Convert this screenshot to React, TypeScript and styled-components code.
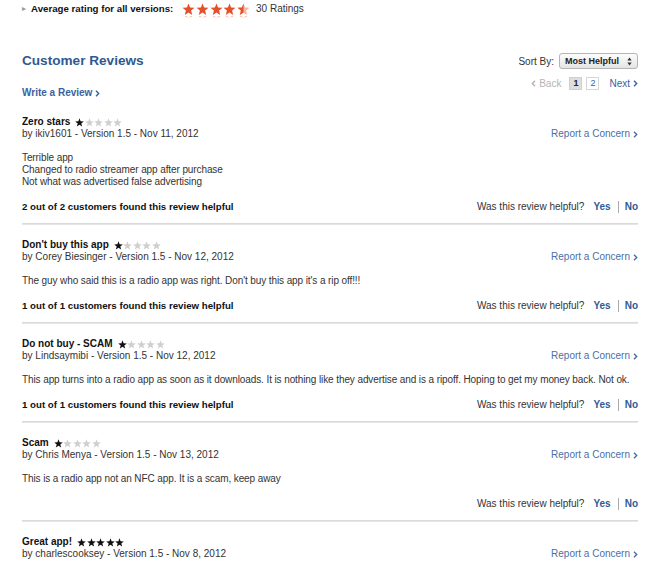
import styled, { createGlobalStyle } from 'styled-components';

interface Review {
    title: string
    rating: number
    author: string
    date: string
    body: string[]
    helpful?: string
}

const reviews: Review[] = [
    {
        title: "Zero stars",
        rating: 1,
        author: "ikiv1601",
        date: "Nov 11, 2012",
        body: ["Terrible app", "Changed to radio streamer app after purchase", "Not what was advertised false advertising"],
        helpful: "2 out of 2 customers found this review helpful",
    },
    {
        title: "Don't buy this app",
        rating: 1,
        author: "Corey Biesinger",
        date: "Nov 12, 2012",
        body: ["The guy who said this is a radio app was right. Don't buy this app it's a rip off!!!"],
        helpful: "1 out of 1 customers found this review helpful",
    },
    {
        title: "Do not buy - SCAM",
        rating: 1,
        author: "Lindsaymibi",
        date: "Nov 12, 2012",
        body: ["This app turns into a radio app as soon as it downloads. It is nothing like they advertise and is a ripoff. Hoping to get my money back. Not ok."],
        helpful: "1 out of 1 customers found this review helpful",
    },
    {
        title: "Scam",
        rating: 1,
        author: "Chris Menya",
        date: "Nov 13, 2012",
        body: ["This is a radio app not an NFC app. It is a scam, keep away"],
    },
    {
        title: "Great app!",
        rating: 5,
        author: "charlescooksey",
        date: "Nov 8, 2012",
        body: [],
    },
];


function BigStar({ half }: { half?: boolean }): JSX.Element {
    const d = "M6.5 0.5 L8.1 4.6 L12.5 4.8 L9.1 7.6 L10.2 11.9 L6.5 9.5 L2.8 11.9 L3.9 7.6 L0.5 4.8 L4.9 4.6 Z";
    return (
        <svg width="13" height="17" viewBox="0 0 13 17">
            <defs>
                <clipPath id="halfclip">
                    <rect x="0" y="0" width="6.5" height="17" />
                </clipPath>
                <linearGradient id="refl" x1="0" y1="0" x2="0" y2="1">
                    <stop offset="0" stopColor="#f3b9a8" />
                    <stop offset="1" stopColor="#ffffff" />
                </linearGradient>
            </defs>
            {half && <path d={d} fill="#f6b59e" />}
            <path d={d} fill="#e5502b" clipPath={half ? "url(#halfclip)" : undefined} />
            <path d="M3.2 13.4 Q6.5 16.2 9.8 13.4" stroke="url(#refl)" strokeWidth="1.6" fill="none" />
        </svg>
    );
}

function SmallStars({ rating }: { rating: number }): JSX.Element {
    const d = "M4.5 0.3 L5.6 3.3 L8.8 3.4 L6.3 5.4 L7.2 8.6 L4.5 6.8 L1.8 8.6 L2.7 5.4 L0.2 3.4 L3.4 3.3 Z";
    return (
        <StarRow>
            {[0, 1, 2, 3, 4].map((i) => (
                <svg key={i} width="9" height="9" viewBox="0 0 9 9">
                    <path d={d} fill={i < rating ? "#111" : "#cfcfcf"} />
                </svg>
            ))}
        </StarRow>
    );
}

function Chevron({ left }: { left?: boolean }): JSX.Element {
    return (
        <svg width="5" height="7" viewBox="0 0 5 7" style={{ marginLeft: left ? 0 : 3, marginRight: left ? 3 : 0 }}>
            <path d={left ? "M4 0.8 L1.3 3.5 L4 6.2" : "M1 0.8 L3.7 3.5 L1 6.2"} stroke="currentColor" strokeWidth="1.4" fill="none" />
        </svg>
    );
}


export default function App(): JSX.Element {
    return (
        <Page>
            <GlobalStyle />
            <RatingRow>
                <Triangle>&#9656;</Triangle>
                <RatingLabel>Average rating for all versions:</RatingLabel>
                <BigStars>
                    <BigStar />
                    <BigStar />
                    <BigStar />
                    <BigStar />
                    <BigStar half />
                </BigStars>
                <RatingCount>30 Ratings</RatingCount>
            </RatingRow>

            <Header>
                <HeaderLeft>
                    <Heading>Customer Reviews</Heading>
                    <WriteLink>Write a Review<Chevron /></WriteLink>
                </HeaderLeft>
                <HeaderRight>
                    <SortRow>
                        Sort By:
                        <SortSelect>
                            Most Helpful
                            <SelectArrows>
                                <svg width="5" height="9" viewBox="0 0 5 9">
                                    <path d="M2.5 0.5 L4.7 3.5 L0.3 3.5 Z M2.5 8.5 L4.7 5.5 L0.3 5.5 Z" fill="#333" />
                                </svg>
                            </SelectArrows>
                        </SortSelect>
                    </SortRow>
                    <Pager>
                        <PagerBack><Chevron left />Back</PagerBack>
                        <PageBox $active>1</PageBox>
                        <PageBox>2</PageBox>
                        <PagerNext>Next<Chevron /></PagerNext>
                    </Pager>
                </HeaderRight>
            </Header>

            <ReviewList>
                {reviews.map((r, i) => (
                    <ReviewBlock key={i}>
                        <ReviewTitle>
                            {r.title}
                            <SmallStars rating={r.rating} />
                        </ReviewTitle>
                        <MetaRow>
                            <span>by {r.author} - Version 1.5 - {r.date}</span>
                            <ConcernLink>Report a Concern<Chevron /></ConcernLink>
                        </MetaRow>
                        {r.body.length > 0 && (
                            <ReviewBody>
                                {r.body.map((line, j) => <div key={j}>{line}</div>)}
                            </ReviewBody>
                        )}
                        {i < reviews.length - 1 && (
                            <>
                                <HelpfulRow>
                                    <HelpfulCount>{r.helpful}</HelpfulCount>
                                    <HelpfulAsk>
                                        Was this review helpful?
                                        <VoteLink>Yes</VoteLink>
                                        <VoteSep />
                                        <VoteLink>No</VoteLink>
                                    </HelpfulAsk>
                                </HelpfulRow>
                                <Divider />
                            </>
                        )}
                    </ReviewBlock>
                ))}
            </ReviewList>
        </Page>
    )
}


const GlobalStyle = createGlobalStyle`
    body {
        margin: 0;
        background: #fff;
        font-family: "Liberation Sans", Arial, sans-serif;
        color: #222;
    }
`;

const Page = styled.div`
    width: 616px;
    padding: 0 12px 0 22px;
    font-size: 10px;
`;

const RatingRow = styled.div`
    display: flex;
    align-items: center;
    height: 17px;
`;

const Triangle = styled.span`
    color: #9a9a9a;
    font-size: 8px;
    width: 9px;
`;

const RatingLabel = styled.span`
    font-weight: bold;
    font-size: 9.7px;
    color: #111;
`;

const BigStars = styled.span`
    display: flex;
    gap: 0.7px;
    margin: 5px 0 0 9px;
`;

const RatingCount = styled.span`
    margin-left: 6px;
    font-size: 10px;
    color: #333;
`;

const Header = styled.div`
    display: flex;
    justify-content: space-between;
    margin-top: 34px;
`;

const HeaderLeft = styled.div`
    display: flex;
    flex-direction: column;
`;

const Heading = styled.div`
    font-size: 13.6px;
    line-height: 20px;
    font-weight: bold;
    color: #2d5a92;
`;

const WriteLink = styled.div`
    margin-top: 15px;
    line-height: 14px;
    font-weight: bold;
    color: #3a62a0;
    display: flex;
    align-items: center;
`;

const HeaderRight = styled.div`
    display: flex;
    flex-direction: column;
    align-items: flex-end;
    padding-top: 2px;
`;

const SortRow = styled.div`
    display: flex;
    align-items: center;
    gap: 5px;
    font-size: 10px;
    color: #333;
`;

const SortSelect = styled.div`
    width: 79px;
    height: 16px;
    box-sizing: border-box;
    border: 1px solid #b5b5b5;
    border-radius: 3px;
    background: linear-gradient(#fdfdfd, #e4e4e4);
    display: flex;
    align-items: center;
    justify-content: space-between;
    padding: 0 5px 0 5px;
    font-size: 9px;
    font-weight: bold;
    color: #222;
`;

const SelectArrows = styled.span`
    display: flex;
`;

const Pager = styled.div`
    display: flex;
    align-items: center;
    margin-top: 7px;
    height: 14px;
    font-size: 10px;
`;

const PagerBack = styled.span`
    color: #b4b4b4;
    display: flex;
    align-items: center;
    margin-right: 8px;
`;

const PageBox = styled.span<{ $active?: boolean }>`
    width: 13px;
    height: 13px;
    box-sizing: border-box;
    border: 1px solid ${p => p.$active ? '#cfcfcf' : '#d6d6d6'};
    background: ${p => p.$active ? '#dedede' : '#fff'};
    font-weight: ${p => p.$active ? 'bold' : 'normal'};
    color: ${p => p.$active ? '#222' : '#3a62a0'};
    display: flex;
    align-items: center;
    justify-content: center;
    font-size: 9px;
    margin-right: 4px;
`;

const PagerNext = styled.span`
    color: #3a62a0;
    display: flex;
    align-items: center;
    margin-left: 6px;
`;

const ReviewList = styled.div`
    padding-top: 2px;
`;

const ReviewBlock = styled.div``;

const ReviewTitle = styled.div`
    display: flex;
    align-items: center;
    font-weight: bold;
    line-height: 12px;
    color: #111;
    margin-top: 14px;
`;

const StarRow = styled.span`
    display: flex;
    gap: 0.5px;
    margin-left: 5px;
`;

const MetaRow = styled.div`
    display: flex;
    justify-content: space-between;
    line-height: 12px;
    color: #333;
`;

const ConcernLink = styled.span`
    color: #4a6fa6;
    display: flex;
    align-items: center;
`;

const ReviewBody = styled.div`
    margin-top: 12px;
    line-height: 12px;
    color: #333;
    white-space: nowrap;
    letter-spacing: -0.1px;
`;

const HelpfulRow = styled.div`
    display: flex;
    justify-content: space-between;
    align-items: center;
    margin-top: 13px;
    line-height: 12px;
`;

const HelpfulCount = styled.span`
    font-weight: bold;
    font-size: 9.7px;
    color: #111;
`;

const HelpfulAsk = styled.span`
    display: flex;
    align-items: center;
    color: #333;
`;

const VoteLink = styled.span`
    font-weight: bold;
    color: #2f5b98;
    margin-left: 9px;
    &:last-child {
        margin-left: 0;
    }
`;

const VoteSep = styled.span`
    width: 1px;
    height: 12px;
    background: #aaa;
    margin: 0 6px 0 7px;
`;

const Divider = styled.div`
    height: 2px;
    margin-top: 10px;
    background: linear-gradient(#d4d4d4, #ececec);
`;
